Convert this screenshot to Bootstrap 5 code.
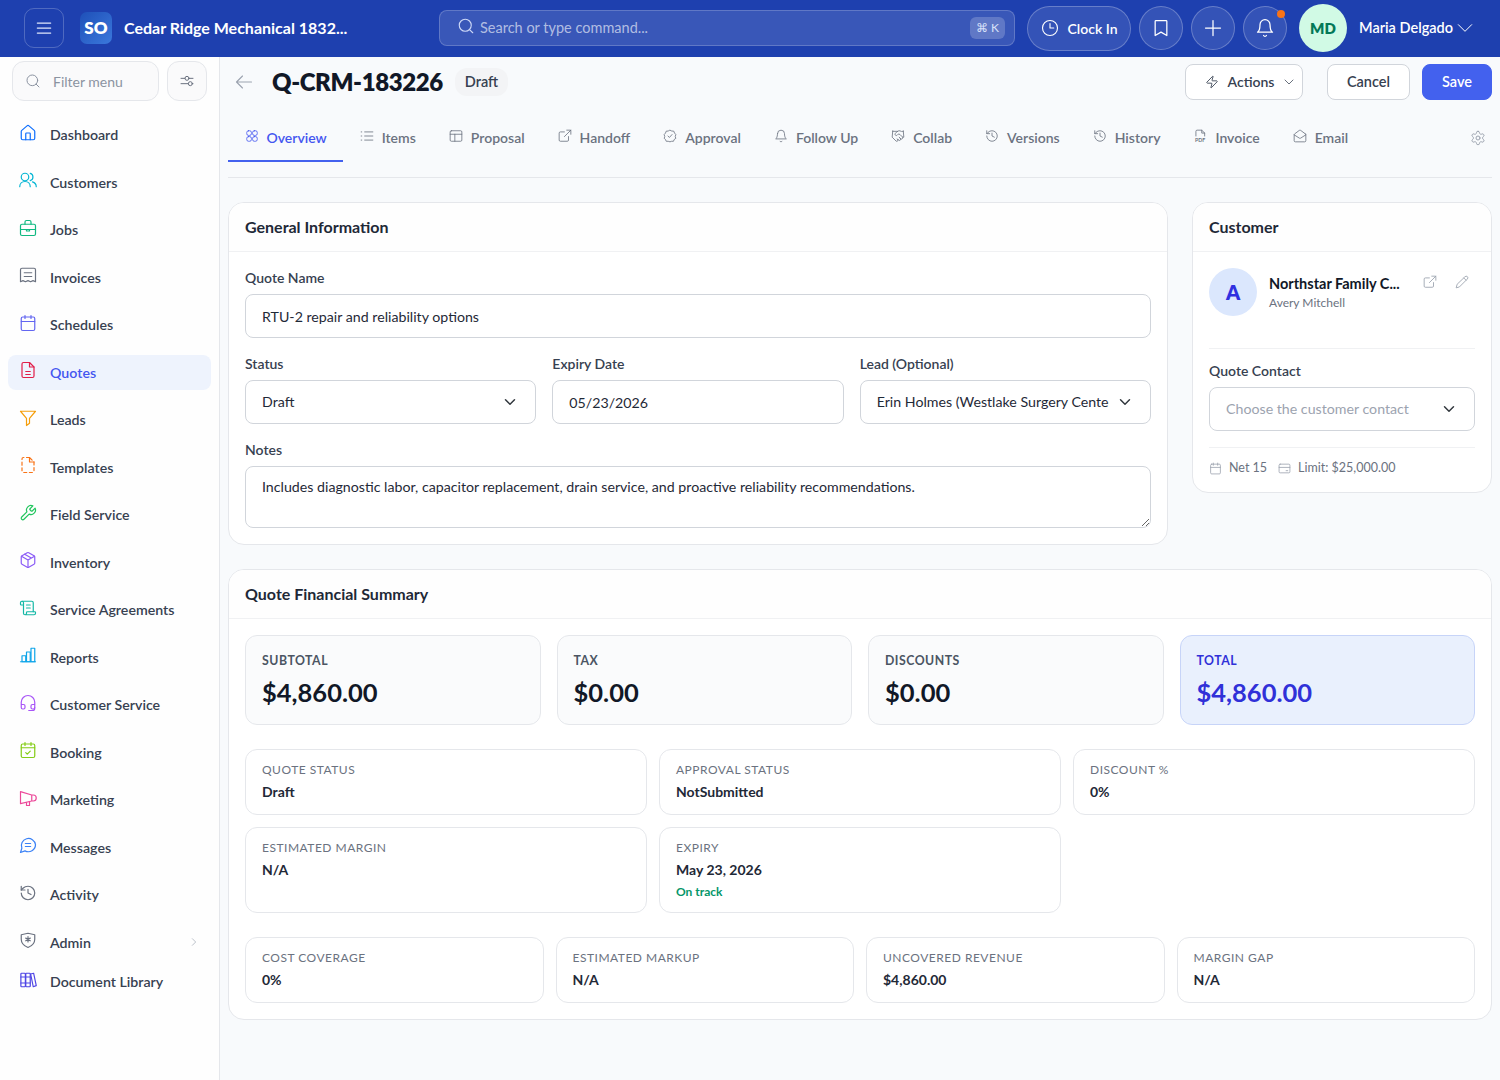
<!DOCTYPE html>
<html lang="en">
<head>
    <meta charset="UTF-8">
    <meta name="viewport" content="width=device-width, initial-scale=1.0">
    <title>Q-CRM-183226 - Quote</title>
    <link href="https://cdn.jsdelivr.net/npm/bootstrap@5.3.0/dist/css/bootstrap.min.css" rel="stylesheet">
    <style>
        body {
            font-family: Lato, "Liberation Sans", sans-serif;
            background-color: #f8fafc;
            color: #111827;
            overflow: hidden;
            font-size: 14px;
        }
        .ico { width: 16px; height: 16px; fill: none; stroke: currentColor; stroke-width: 1.5; stroke-linecap: round; stroke-linejoin: round; flex: none; }

        /* top bar */
        .topbar { height: 57px; background: #1e40af; color: #fff; padding: 0 13px 1px 24px; }
        .tb-menu { width: 40px; height: 40px; border: 1px solid rgba(255,255,255,.22); border-radius: 10px; color: #dfe6fb; }
        .tb-menu .ico { width: 20px; height: 20px; }
        .tb-logo { width: 32px; height: 32px; border-radius: 7px; background: linear-gradient(135deg, #1e50b8, #3b78dc); font-weight: 800; font-size: 17px; margin-left: 16px; }
        .tb-title { width: 312px; margin-left: 12px; font-size: 16px; font-weight: 700; white-space: nowrap; }
        .tb-search { width: 576px; height: 36px; margin-left: 3px; border: 1px solid rgba(255,255,255,.2); background: rgba(255,255,255,.12); border-radius: 8px; padding: 0 9px 0 17px; color: rgba(255,255,255,.62); font-size: 14.5px; }
        .tb-search .ico { width: 18px; height: 18px; margin-right: 5px; margin-top: -5px; color: #cdd8f7; }
        .tb-kbd { background: rgba(255,255,255,.2); border-radius: 6px; padding: 2px 6px; font-size: 12px; color: #d8e1f9; }
        .tb-clock { width: 104px; height: 45px; margin-left: 12px; border: 1px solid rgba(255,255,255,.25); background: rgba(255,255,255,.1); border-radius: 23px; font-weight: 600; font-size: 14px; }
        .tb-clock .ico { width: 18px; height: 18px; margin-right: 9px; }
        .tb-round { width: 44px; height: 44px; margin-left: 8px; border: 1px solid rgba(255,255,255,.25); background: rgba(255,255,255,.1); border-radius: 50%; }
        .tb-round .ico { width: 20px; height: 20px; }
        .tb-dot { top: 3px; right: 1px; width: 8px; height: 8px; background: #f97316; border-radius: 50%; }
        .tb-avatar { width: 48px; height: 48px; margin-left: 12px; background: #d1fae5; color: #047857; border-radius: 50%; font-weight: 800; font-size: 15px; }
        .tb-name { margin-left: 12px; font-size: 14.5px; font-weight: 600; white-space: nowrap; }
        .tb-caret { width: 20px; height: 20px; margin-left: 2px; stroke-width: 1.2; }

        /* sidebar */
        .side { width: 220px; height: 1023px; background: #fefefe; border-right: 1px solid #e5e7eb; flex: none; padding: 4px 8px 0; }
        .side-filter { width: 147px; height: 40px; margin-left: 4px; border: 1px solid #e5e7eb; border-radius: 12px; background: #fafafb; color: #8b93a1; font-size: 14px; padding-left: 12px; gap: 12px; }
        .side-tune { width: 40px; height: 40px; margin-left: 8px; border: 1px solid #e5e7eb; border-radius: 12px; background: #fafafb; color: #6b7280; }
        .side-list { margin-top: 16px; }
        .side-item { height: 35.5px; margin-bottom: 12px; padding-left: 11px; border-radius: 8px; color: #374151; font-size: 14.2px; font-weight: 600; text-decoration: none; gap: 13px; }
        .side-item .ico { width: 18px; height: 18px; margin-top: -4px; stroke-width: 1.6; }
        .side-item.is-active { background: #eef3fd; color: #4456f0; }
        .side-item.is-tight { margin-bottom: 4px; }
        .side-item .side-more { width: 10px; height: 10px; margin-top: 0; color: #9ca3af; margin-right: 12px; }

        /* main */
        .main-area { padding: 7px 8px 0; min-width: 0; }
        .page-head { height: 36px; margin-bottom: 15px; }
        .back-ico { width: 18px; height: 18px; color: #9ca3af; margin-left: 7px; }
        .page-title { font-size: 24px; font-weight: 800; margin: 0 0 0 19px; letter-spacing: -.4px; }
        .draft-pill { margin-left: 12px; padding: 3px 10px; background: #f3f4f6; border-radius: 12px; font-size: 14.5px; font-weight: 600; color: #374151; }
        .head-btn { height: 36px; border: 1px solid #d1d5db; border-radius: 8px; background: #fff; color: #374151; font-size: 14.5px; font-weight: 600; padding: 0; }
        .head-actions { width: 118px; gap: 9px; font-size: 14px; padding: 0 0 1px 12px; }
        .head-save { background: #4361ee; border-color: #4361ee; color: #fff; }
        .tab-strip { height: 63px; border-bottom: 1px solid #e5e7eb; margin-bottom: 24px; }
        .tab-link { height: 47px; padding: 0 16.5px; gap: 8px; color: #6b7280; font-size: 14px; font-weight: 600; text-decoration: none; white-space: nowrap; border-bottom: 2px solid transparent; }
        .tab-link .ico { width: 14px; height: 14px; stroke-width: 1.4; margin-top: -3px; }
        .tab-link.is-active { color: #4456f0; border-bottom-color: #4361ee; }
        .tab-gear { width: 16px; height: 16px; color: #9ca3af; margin: 15px 6px 0 auto; }

        /* cards */
        .panel { border: 1px solid #e5e7eb; border-radius: 16px; background: #fff; --bs-card-bg: #fff; overflow: hidden; }
        .panel-head { height: 49px; background: #fefefe; border-bottom: 1px solid #f0f1f3; padding: 0 16px; font-size: 16px; font-weight: 700; color: #1f2937; }
        .panel-body { padding: 16px; }
        .field-label { display: block; height: 18px; line-height: 20px; margin-bottom: 8px; font-size: 14px; font-weight: 600; color: #374151; }
        .field-input { height: 44px; border-color: #d1d5db; border-radius: 8px; padding: 0 16px; font-size: 14.2px; color: #1f2937; }
        .form-select.field-input { background-position: right 17px center; padding-right: 41px; }
        textarea.field-input { height: 62px; padding-top: 11px; line-height: 18px; }
        .select-empty.field-input { color: #9ca3af; }
        .cust-avatar { width: 48px; height: 48px; background: #dbe7fd; color: #3030e0; border-radius: 50%; font-size: 20px; font-weight: 800; flex: none; }
        .cust-info { margin: 0 8px 0 12px; width: 146px; }
        .cust-name { font-size: 14.5px; font-weight: 700; color: #111827; white-space: nowrap; line-height: 18px; margin-top: 7px; }
        .cust-sub { font-size: 12px; color: #6b7280; line-height: 18px; margin-top: 1px; }
        .cust-act { color: #9ca3af; gap: 18px; margin-top: 7px; }
        .cust-act .ico { width: 14px; height: 14px; }
        .cust-rule { border-top: 1px solid #f0f1f3; }
        .cust-contact { padding-top: 13px; }
        .cust-contact .field-label { margin-bottom: 7px; line-height: 18px; }
        .cust-foot { height: 20px; margin-top: 10px; margin-bottom: 14px; gap: 11px; font-size: 12.5px; color: #6b7280; }
        .cust-foot .ico { width: 13px; height: 13px; color: #9ca3af; margin-right: 7px; }
        .fin-gap { --bs-gutter-x: 12px; --bs-gutter-y: 12px; }
        .sum-box { height: 90px; padding: 16px; border: 1px solid #e5e7eb; border-radius: 12px; background: #fafbfc; }
        .sum-box.is-total { background: #e9f0fd; border-color: #c7d4f8; color: #3030d8; }
        .sum-label { font-size: 12.3px; font-weight: 700; letter-spacing: .5px; color: #4b5563; line-height: 18px; }
        .sum-value { font-size: 25.5px; font-weight: 700; line-height: 34px; margin-top: 5px; }
        .is-total .sum-label, .is-total .sum-value { color: #3030d8; }
        .stat-box { padding: 12px 16px; border: 1px solid #e5e7eb; border-radius: 12px; background: #fff; }
        .stat-h66 { height: 66px; }
        .stat-h86 { height: 86px; }
        .stat-label { font-size: 12px; letter-spacing: .5px; color: #6b7280; line-height: 16px; }
        .stat-value { font-size: 14px; font-weight: 700; line-height: 18px; margin-top: 5px; color: #1f2937; }
        .stat-note { font-size: 12px; font-weight: 700; color: #059669; margin-top: 5px; line-height: 16px; }
    </style>
</head>
<body>
    <svg class="d-none">
        <symbol id="i-menu" viewBox="0 0 24 24"><path d="M4 6h16M4 12h16M4 18h16"/></symbol>
        <symbol id="i-search" viewBox="0 0 24 24"><circle cx="11" cy="11" r="8"/><path d="m21 21-4.3-4.3"/></symbol>
        <symbol id="i-clock" viewBox="0 0 24 24"><circle cx="12" cy="12" r="10"/><path d="M12 6v6h5"/></symbol>
        <symbol id="i-bookmark" viewBox="0 0 24 24"><path d="M6 3h12a1 1 0 0 1 1 1v17l-7-4-7 4V4a1 1 0 0 1 1-1z"/></symbol>
        <symbol id="i-plus" viewBox="0 0 24 24"><path d="M12 3v18M3 12h18"/></symbol>
        <symbol id="i-bell" viewBox="0 0 24 24"><path d="M6 8a6 6 0 0 1 12 0c0 7 3 9 3 9H3s3-2 3-9"/><path d="M10.3 21a1.94 1.94 0 0 0 3.4 0"/></symbol>
        <symbol id="i-down" viewBox="0 0 24 24"><path d="m4 8 8 8 8-8"/></symbol>
        <symbol id="i-right" viewBox="0 0 24 24"><path d="m8 4 8 8-8 8"/></symbol>
        <symbol id="i-tune" viewBox="0 0 24 24"><path d="M3 8h6M15 8h6M3 16h11M20 16h1"/><circle cx="12" cy="8" r="3"/><circle cx="17" cy="16" r="3"/></symbol>
        <symbol id="i-back" viewBox="0 0 24 24"><path d="M22 12H2M10 4l-8 8 8 8"/></symbol>
        <symbol id="i-zap" viewBox="0 0 24 24"><path d="M4 14a1 1 0 0 1-.78-1.63l9.9-10.2a.5.5 0 0 1 .86.46l-1.92 6.02A1 1 0 0 0 13 10h7a1 1 0 0 1 .78 1.63l-9.9 10.2a.5.5 0 0 1-.86-.46l1.92-6.02A1 1 0 0 0 11 14z"/></symbol>
        <symbol id="i-home" viewBox="0 0 24 24"><path d="M15 21v-8a1 1 0 0 0-1-1h-4a1 1 0 0 0-1 1v8"/><path d="M3 10a2 2 0 0 1 .709-1.528l7-5.999a2 2 0 0 1 2.582 0l7 5.999A2 2 0 0 1 21 10v9a2 2 0 0 1-2 2H5a2 2 0 0 1-2-2z"/></symbol>
        <symbol id="i-users" viewBox="0 0 24 24"><circle cx="8" cy="8" r="5"/><path d="M1 21c0-4 3-7 7-7s7 3 7 7"/><path d="M15 3.200a5 5 0 0 1 0 9.600"/><path d="M18 14.500c3 1 5 3.500 5 6.500"/></symbol>
        <symbol id="i-case" viewBox="0 0 24 24"><rect x="2" y="7" width="20" height="15" rx="2"/><path d="M8 7V4a2 2 0 0 1 2-2h4a2 2 0 0 1 2 2v3"/><path d="M2 14h20M10 14h4v2h-4z"/></symbol>
        <symbol id="i-receipt" viewBox="0 0 24 24"><path d="M2 5a2 2 0 0 1 2-2h16a2 2 0 0 1 2 2v16l-3.300-1.500-3.300 1.500-3.400-1.500-3.400 1.500-3.300-1.500L2 21z"/><path d="M7 9h10M7 14h10"/></symbol>
        <symbol id="i-cal" viewBox="0 0 24 24"><rect x="3" y="4" width="18" height="18" rx="2"/><path d="M8 2v4M16 2v4M3 10h18"/></symbol>
        <symbol id="i-file" viewBox="0 0 24 24"><path d="M14 2H6a2 2 0 0 0-2 2v16a2 2 0 0 0 2 2h12a2 2 0 0 0 2-2V8z"/><path d="M14 2v6h6M9 14h6M9 18h6"/></symbol>
        <symbol id="i-funnel" viewBox="0 0 24 24"><path d="M2 3h20l-8 9.500V19l-4 3v-9.500z"/></symbol>
        <symbol id="i-tpl" viewBox="0 0 24 24"><path d="M14 2H6a2 2 0 0 0-2 2v16a2 2 0 0 0 2 2h12a2 2 0 0 0 2-2V8z" stroke-dasharray="4 3.500"/><path d="M14 2v6h6"/></symbol>
        <symbol id="i-wrench" viewBox="0 0 24 24"><path d="M14.700 6.300a1 1 0 0 0 0 1.400l1.600 1.600a1 1 0 0 0 1.400 0l3.770-3.770a6 6 0 0 1-7.940 7.940l-6.910 6.910a2.120 2.120 0 0 1-3-3l6.910-6.910a6 6 0 0 1 7.940-7.940l-3.760 3.760z"/></symbol>
        <symbol id="i-box" viewBox="0 0 24 24"><path d="M21 8a2 2 0 0 0-1-1.730l-7-4a2 2 0 0 0-2 0l-7 4A2 2 0 0 0 3 8v8a2 2 0 0 0 1 1.730l7 4a2 2 0 0 0 2 0l7-4A2 2 0 0 0 21 16Z"/><path d="m3.300 7 8.700 5 8.700-5M12 22V12M7.500 4.270l9 5.150"/></symbol>
        <symbol id="i-scroll" viewBox="0 0 24 24"><path d="M15 12h-5M15 8h-5M19 17V5a2 2 0 0 0-2-2H4"/><path d="M8 21h12a2 2 0 0 0 2-2v-1a1 1 0 0 0-1-1H11a1 1 0 0 0-1 1v1a2 2 0 1 1-4 0V5a2 2 0 1 0-4 0v2a1 1 0 0 0 1 1h3"/></symbol>
        <symbol id="i-bars" viewBox="0 0 24 24"><path d="M2 21h20"/><rect x="4" y="13" width="5" height="8"/><rect x="10" y="8" width="5" height="13"/><rect x="16" y="3" width="5" height="18"/></symbol>
        <symbol id="i-head" viewBox="0 0 24 24"><path d="M3 14h3a2 2 0 0 1 2 2v2a2 2 0 0 1-2 2H5a2 2 0 0 1-2-2v-7a9 9 0 0 1 18 0v7a2 2 0 0 1-2 2h-1a2 2 0 0 1-2-2v-2a2 2 0 0 1 2-2h3"/><path d="M21 18v1a3 3 0 0 1-3 3h-5"/></symbol>
        <symbol id="i-calcheck" viewBox="0 0 24 24"><rect x="3" y="4" width="18" height="18" rx="2"/><path d="M8 2v4M16 2v4M3 9h18M9 15.500l2 2 4-4"/></symbol>
        <symbol id="i-mega" viewBox="0 0 24 24"><path d="M2 3.500v16L17 16h2a4 4 0 0 0 0-8h-2zM17 8v8"/><path d="M10 18v4h4v-5"/></symbol>
        <symbol id="i-msg" viewBox="0 0 24 24"><path d="M22 11.500a9.500 9.500 0 0 1-14 8.300L2 22l1.800-5.600A9.500 9.500 0 1 1 22 11.500z"/><path d="M8.500 10h7M8.500 14h7"/></symbol>
        <symbol id="i-hist" viewBox="0 0 24 24"><path d="M3 12a9 9 0 1 0 9-9 9.750 9.750 0 0 0-6.740 2.740L3 8"/><path d="M3 3v5h5M12 7v5l4 2"/></symbol>
        <symbol id="i-shield" viewBox="0 0 24 24"><path d="M12 22c-5-2-9-5-9-11V5l9-2 9 2v6c0 6-4 9-9 11z"/><path d="M12 7.500v7M9 9.500l6 3.500M15 9.500l-6 3.500"/></symbol>
        <symbol id="i-lib" viewBox="0 0 24 24"><rect x="2.500" y="3" width="6" height="18" rx="1"/><rect x="9" y="3" width="6" height="18" rx="1"/><path d="m15.500 4 4-1 3.500 16.500-4 1.500z"/><path d="M2.500 8h12.500M2.500 16h12.500"/></symbol>
        <symbol id="i-grid" viewBox="0 0 24 24"><rect x="3" y="3" width="8" height="8" rx="3"/><rect x="13" y="3" width="8" height="8" rx="3"/><rect x="3" y="13" width="8" height="8" rx="3"/><rect x="13" y="13" width="8" height="8" rx="3"/></symbol>
        <symbol id="i-list" viewBox="0 0 24 24"><path d="M8 5h14M8 12h14M8 19h14M2 5h1M2 12h1M2 19h1"/></symbol>
        <symbol id="i-panel" viewBox="0 0 24 24"><rect x="2" y="3" width="20" height="18" rx="2"/><path d="M2 9h20M10 9v12"/></symbol>
        <symbol id="i-ext" viewBox="0 0 24 24"><path d="M18 13v6a2 2 0 0 1-2 2H4a2 2 0 0 1-2-2V7a2 2 0 0 1 2-2h7"/><path d="M15 2h7v7M22 2 11 13"/></symbol>
        <symbol id="i-badge" viewBox="0 0 24 24"><path d="M12 2l3 1.500 3.500.2 1.200 3.200L22 9.500 21 13l1 3-2.800 2-1.200 3-3.500.1L12 22l-3-.9-3.500-.1-1.200-3L2 16l1-3-1-3.500L4.300 7 5.500 3.700 9 3.500z"/><path d="m8.500 12 2.500 2.500 4.500-5"/></symbol>
        <symbol id="i-hand" viewBox="0 0 24 24"><path d="m11 17 2 2a1 1 0 1 0 3-3"/><path d="m14 14 2.500 2.500a1 1 0 1 0 3-3l-3.880-3.880a3 3 0 0 0-4.240 0l-.88.88a1 1 0 1 1-3-3l2.810-2.810a5.790 5.790 0 0 1 7.060-.87l.47.28a2 2 0 0 0 1.420.25L21 4"/><path d="m21 3 1 11h-2M3 3 2 14l6.500 6.500a1 1 0 1 0 3-3M3 4h8"/></symbol>
        <symbol id="i-mail" viewBox="0 0 24 24"><path d="M21.200 8.400c.5.380.8.970.8 1.600v10a2 2 0 0 1-2 2H4a2 2 0 0 1-2-2V10a2 2 0 0 1 .8-1.600l8-6a2 2 0 0 1 2.400 0l8 6Z"/><path d="m22 10-8.970 5.700a1.940 1.940 0 0 1-2.060 0L2 10"/></symbol>
        <symbol id="i-gear" viewBox="0 0 24 24"><path d="M12.220 2h-.44a2 2 0 0 0-2 2v.18a2 2 0 0 1-1 1.730l-.43.25a2 2 0 0 1-2 0l-.15-.08a2 2 0 0 0-2.730.73l-.22.38a2 2 0 0 0 .73 2.730l.15.1a2 2 0 0 1 1 1.720v.51a2 2 0 0 1-1 1.740l-.15.09a2 2 0 0 0-.73 2.730l.22.38a2 2 0 0 0 2.730.73l.15-.08a2 2 0 0 1 2 0l.43.25a2 2 0 0 1 1 1.730V20a2 2 0 0 0 2 2h.44a2 2 0 0 0 2-2v-.18a2 2 0 0 1 1-1.730l.43-.25a2 2 0 0 1 2 0l.15.08a2 2 0 0 0 2.730-.73l.22-.39a2 2 0 0 0-.73-2.730l-.15-.08a2 2 0 0 1-1-1.740v-.5a2 2 0 0 1 1-1.740l.15-.09a2 2 0 0 0 .73-2.730l-.22-.38a2 2 0 0 0-2.730-.73l-.15.08a2 2 0 0 1-2 0l-.43-.25a2 2 0 0 1-1-1.730V4a2 2 0 0 0-2-2z"/><circle cx="12" cy="12" r="3"/></symbol>
        <symbol id="i-pdf" viewBox="0 0 24 24"><path d="M5 12V4a2 2 0 0 1 2-2h8l5 5v5"/><path d="M15 2v5h5"/><text x="12" y="22" text-anchor="middle" font-size="9" font-weight="700" fill="currentColor" stroke="none">PDF</text></symbol>
        <symbol id="i-pencil" viewBox="0 0 24 24"><path d="M17 3a2.850 2.830 0 1 1 4 4L7.500 20.500 2 22l1.500-5.500Z"/><path d="m15 5 4 4"/></symbol>
        <symbol id="i-card" viewBox="0 0 24 24"><rect x="2" y="4" width="20" height="16" rx="2"/><path d="M2 10h20M15 16h3"/></symbol>
    </svg>

    <header class="topbar d-flex align-items-center">
        <button class="tb-menu btn p-0 d-flex align-items-center justify-content-center"><svg class="ico"><use href="#i-menu"/></svg></button>
        <div class="tb-logo d-flex align-items-center justify-content-center">SO</div>
        <div class="tb-title">Cedar Ridge Mechanical 1832...</div>
        <div class="tb-search d-flex align-items-center">
            <svg class="ico"><use href="#i-search"/></svg>
            <span>Search or type command...</span>
            <span class="tb-kbd ms-auto">⌘ K</span>
        </div>
        <div class="tb-clock d-flex align-items-center justify-content-center"><svg class="ico"><use href="#i-clock"/></svg>Clock In</div>
        <div class="tb-round d-flex align-items-center justify-content-center"><svg class="ico"><use href="#i-bookmark"/></svg></div>
        <div class="tb-round d-flex align-items-center justify-content-center"><svg class="ico"><use href="#i-plus"/></svg></div>
        <div class="tb-round d-flex align-items-center justify-content-center position-relative"><svg class="ico"><use href="#i-bell"/></svg><span class="tb-dot position-absolute"></span></div>
        <div class="tb-avatar d-flex align-items-center justify-content-center">MD</div>
        <div class="tb-name">Maria Delgado</div>
        <svg class="ico tb-caret"><use href="#i-down"/></svg>
    </header>

    <div class="d-flex">
        <aside class="side">
            <div class="d-flex">
                <div class="side-filter d-flex align-items-center"><svg class="ico"><use href="#i-search"/></svg>Filter menu</div>
                <div class="side-tune d-flex align-items-center justify-content-center"><svg class="ico"><use href="#i-tune"/></svg></div>
            </div>
            <nav class="side-list">
                <a class="side-item d-flex align-items-center" href="#"><svg class="ico text-primary"><use href="#i-home"/></svg>Dashboard</a>
                <a class="side-item d-flex align-items-center" href="#"><svg class="ico" style="color:#06b6d4"><use href="#i-users"/></svg>Customers</a>
                <a class="side-item d-flex align-items-center" href="#"><svg class="ico" style="color:#10b981"><use href="#i-case"/></svg>Jobs</a>
                <a class="side-item d-flex align-items-center" href="#"><svg class="ico" style="color:#6b7280"><use href="#i-receipt"/></svg>Invoices</a>
                <a class="side-item d-flex align-items-center" href="#"><svg class="ico" style="color:#6366f1"><use href="#i-cal"/></svg>Schedules</a>
                <a class="side-item is-active d-flex align-items-center" href="#"><svg class="ico" style="color:#e11d48"><use href="#i-file"/></svg>Quotes</a>
                <a class="side-item d-flex align-items-center" href="#"><svg class="ico" style="color:#f59e0b"><use href="#i-funnel"/></svg>Leads</a>
                <a class="side-item d-flex align-items-center" href="#"><svg class="ico" style="color:#f97316"><use href="#i-tpl"/></svg>Templates</a>
                <a class="side-item d-flex align-items-center" href="#"><svg class="ico" style="color:#22c55e"><use href="#i-wrench"/></svg>Field Service</a>
                <a class="side-item d-flex align-items-center" href="#"><svg class="ico" style="color:#8b5cf6"><use href="#i-box"/></svg>Inventory</a>
                <a class="side-item d-flex align-items-center" href="#"><svg class="ico" style="color:#14b8a6"><use href="#i-scroll"/></svg>Service Agreements</a>
                <a class="side-item d-flex align-items-center" href="#"><svg class="ico" style="color:#0ea5e9"><use href="#i-bars"/></svg>Reports</a>
                <a class="side-item d-flex align-items-center" href="#"><svg class="ico" style="color:#a855f7"><use href="#i-head"/></svg>Customer Service</a>
                <a class="side-item d-flex align-items-center" href="#"><svg class="ico" style="color:#84cc16"><use href="#i-calcheck"/></svg>Booking</a>
                <a class="side-item d-flex align-items-center" href="#"><svg class="ico" style="color:#ec4899"><use href="#i-mega"/></svg>Marketing</a>
                <a class="side-item d-flex align-items-center" href="#"><svg class="ico" style="color:#3b82f6"><use href="#i-msg"/></svg>Messages</a>
                <a class="side-item d-flex align-items-center" href="#"><svg class="ico" style="color:#6b7280"><use href="#i-hist"/></svg>Activity</a>
                <a class="side-item is-tight d-flex align-items-center" href="#"><svg class="ico" style="color:#6b7280"><use href="#i-shield"/></svg>Admin<svg class="ico side-more ms-auto"><use href="#i-right"/></svg></a>
                <a class="side-item d-flex align-items-center" href="#"><svg class="ico" style="color:#4f46e5"><use href="#i-lib"/></svg>Document Library</a>
            </nav>
        </aside>

        <main class="main-area flex-grow-1">
            <div class="page-head d-flex align-items-center">
                <svg class="ico back-ico"><use href="#i-back"/></svg>
                <h1 class="page-title">Q-CRM-183226</h1>
                <span class="draft-pill">Draft</span>
                <button class="head-btn head-actions ms-auto d-flex align-items-center justify-content-center"><svg class="ico" style="width:14px;height:14px"><use href="#i-zap"/></svg>Actions<svg class="ico" style="width:12px;height:12px"><use href="#i-down"/></svg></button>
                <button class="head-btn" style="width:83px;margin-left:24px">Cancel</button>
                <button class="head-btn head-save" style="width:70px;margin-left:12px">Save</button>
            </div>

            <div class="tab-strip d-flex align-items-start">
                <a class="tab-link is-active d-flex align-items-center" href="#"><svg class="ico"><use href="#i-grid"/></svg>Overview</a>
                <a class="tab-link d-flex align-items-center" href="#"><svg class="ico"><use href="#i-list"/></svg>Items</a>
                <a class="tab-link d-flex align-items-center" href="#"><svg class="ico"><use href="#i-panel"/></svg>Proposal</a>
                <a class="tab-link d-flex align-items-center" href="#"><svg class="ico"><use href="#i-ext"/></svg>Handoff</a>
                <a class="tab-link d-flex align-items-center" href="#"><svg class="ico"><use href="#i-badge"/></svg>Approval</a>
                <a class="tab-link d-flex align-items-center" href="#"><svg class="ico"><use href="#i-bell"/></svg>Follow Up</a>
                <a class="tab-link d-flex align-items-center" href="#"><svg class="ico"><use href="#i-hand"/></svg>Collab</a>
                <a class="tab-link d-flex align-items-center" href="#"><svg class="ico"><use href="#i-hist"/></svg>Versions</a>
                <a class="tab-link d-flex align-items-center" href="#"><svg class="ico"><use href="#i-hist"/></svg>History</a>
                <a class="tab-link d-flex align-items-center" href="#"><svg class="ico"><use href="#i-pdf"/></svg>Invoice</a>
                <a class="tab-link d-flex align-items-center" href="#"><svg class="ico"><use href="#i-mail"/></svg>Email</a>
                <svg class="ico tab-gear"><use href="#i-gear"/></svg>
            </div>

            <div class="d-flex align-items-start gap-4 mb-4">
                <section class="panel card flex-grow-1">
                    <div class="panel-head d-flex align-items-center">General Information</div>
                    <div class="panel-body">
                        <label class="field-label">Quote Name</label>
                        <input class="form-control field-input mb-3" value="RTU-2 repair and reliability options">
                        <div class="row g-3 mb-3">
                            <div class="col-4">
                                <label class="field-label">Status</label>
                                <select class="form-select field-input"><option>Draft</option></select>
                            </div>
                            <div class="col-4">
                                <label class="field-label">Expiry Date</label>
                                <input class="form-control field-input" value="05/23/2026">
                            </div>
                            <div class="col-4">
                                <label class="field-label">Lead (Optional)</label>
                                <select class="form-select field-input"><option>Erin Holmes (Westlake Surgery Center)</option></select>
                            </div>
                        </div>
                        <label class="field-label">Notes</label>
                        <textarea class="form-control field-input">Includes diagnostic labor, capacitor replacement, drain service, and proactive reliability recommendations.</textarea>
                    </div>
                </section>

                <section class="panel card flex-shrink-0" style="width:300px">
                    <div class="panel-head d-flex align-items-center">Customer</div>
                    <div class="panel-body pb-0">
                        <div class="d-flex pb-3 mb-3">
                            <div class="cust-avatar d-flex align-items-center justify-content-center">A</div>
                            <div class="cust-info">
                                <div class="cust-name">Northstar Family C...</div>
                                <div class="cust-sub">Avery Mitchell</div>
                            </div>
                            <div class="cust-act d-flex"><svg class="ico"><use href="#i-ext"/></svg><svg class="ico"><use href="#i-pencil"/></svg></div>
                        </div>
                        <div class="cust-rule cust-contact">
                            <label class="field-label">Quote Contact</label>
                            <select class="form-select field-input select-empty"><option>Choose the customer contact</option></select>
                        </div>
                        <div class="cust-rule mt-3">
                            <div class="cust-foot d-flex align-items-center">
                                <span class="d-flex align-items-center"><svg class="ico"><use href="#i-cal"/></svg>Net 15</span>
                                <span class="d-flex align-items-center"><svg class="ico"><use href="#i-card"/></svg>Limit: $25,000.00</span>
                            </div>
                        </div>
                    </div>
                </section>
            </div>

            <section class="panel card">
                <div class="panel-head d-flex align-items-center">Quote Financial Summary</div>
                <div class="panel-body">
                    <div class="row g-3 mb-4">
                        <div class="col-3"><div class="sum-box"><div class="sum-label">SUBTOTAL</div><div class="sum-value">$4,860.00</div></div></div>
                        <div class="col-3"><div class="sum-box"><div class="sum-label">TAX</div><div class="sum-value">$0.00</div></div></div>
                        <div class="col-3"><div class="sum-box"><div class="sum-label">DISCOUNTS</div><div class="sum-value">$0.00</div></div></div>
                        <div class="col-3"><div class="sum-box is-total"><div class="sum-label">TOTAL</div><div class="sum-value">$4,860.00</div></div></div>
                    </div>
                    <div class="row fin-gap mb-4">
                        <div class="col-4"><div class="stat-box stat-h66"><div class="stat-label">QUOTE STATUS</div><div class="stat-value">Draft</div></div></div>
                        <div class="col-4"><div class="stat-box stat-h66"><div class="stat-label">APPROVAL STATUS</div><div class="stat-value">NotSubmitted</div></div></div>
                        <div class="col-4"><div class="stat-box stat-h66"><div class="stat-label">DISCOUNT %</div><div class="stat-value">0%</div></div></div>
                        <div class="col-4"><div class="stat-box stat-h86"><div class="stat-label">ESTIMATED MARGIN</div><div class="stat-value">N/A</div></div></div>
                        <div class="col-4"><div class="stat-box stat-h86"><div class="stat-label">EXPIRY</div><div class="stat-value">May 23, 2026</div><div class="stat-note">On track</div></div></div>
                    </div>
                    <div class="row fin-gap">
                        <div class="col-3"><div class="stat-box stat-h66"><div class="stat-label">COST COVERAGE</div><div class="stat-value">0%</div></div></div>
                        <div class="col-3"><div class="stat-box stat-h66"><div class="stat-label">ESTIMATED MARKUP</div><div class="stat-value">N/A</div></div></div>
                        <div class="col-3"><div class="stat-box stat-h66"><div class="stat-label">UNCOVERED REVENUE</div><div class="stat-value">$4,860.00</div></div></div>
                        <div class="col-3"><div class="stat-box stat-h66"><div class="stat-label">MARGIN GAP</div><div class="stat-value">N/A</div></div></div>
                    </div>
                </div>
            </section>
        </main>
    </div>

    <script src="https://cdn.jsdelivr.net/npm/bootstrap@5.3.0/dist/js/bootstrap.bundle.min.js"></script>
</body>
</html>
